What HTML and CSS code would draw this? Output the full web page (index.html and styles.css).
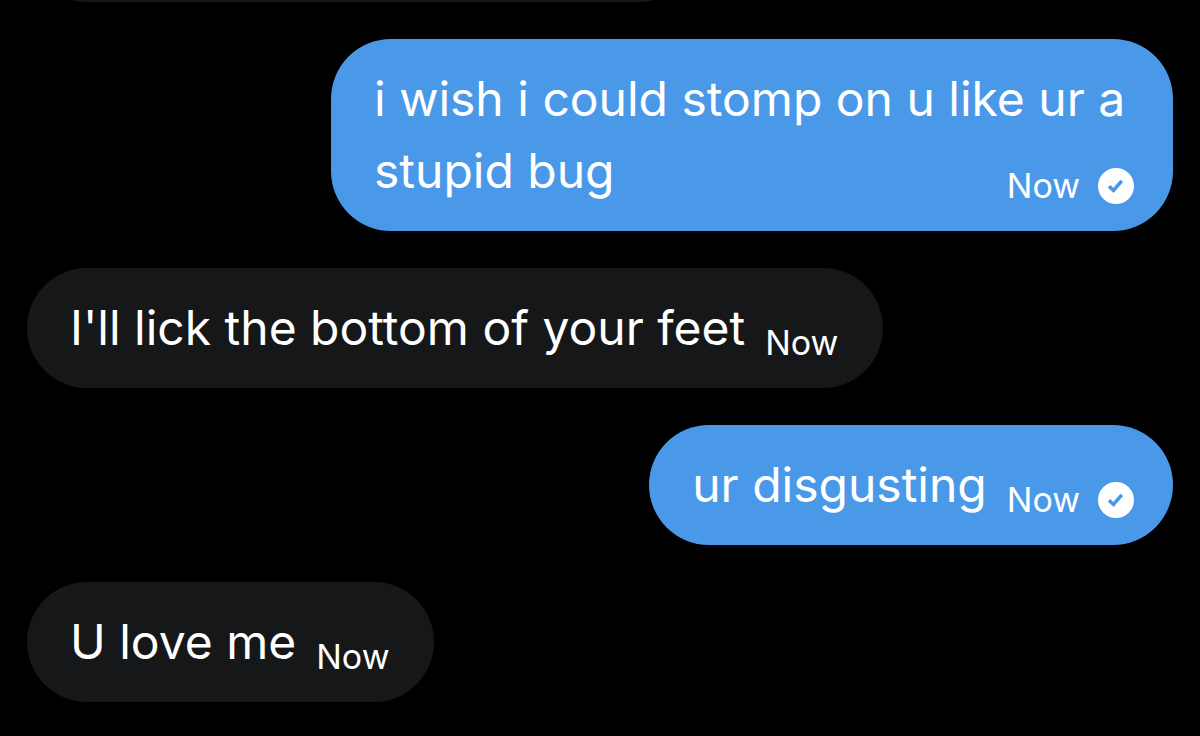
FILE: index.html
```html
<!DOCTYPE html>
<html lang="en">
<head>
<meta charset="utf-8">
<meta name="viewport" content="width=device-width, initial-scale=1">
<title>Chat</title>
<link rel="stylesheet" href="styles.css">
</head>
<body>
<main class="chat">
  <div class="bubble received previous"></div>
  <article class="bubble sent">
    <span class="text">i wish i could stomp on u like ur a stupid bug</span>
    <span class="meta"><span>Now</span>
      <svg class="check" viewBox="0 0 36 36" role="img" aria-label="Sent"><circle cx="18" cy="18" r="18" fill="#fff"/><path d="M11 18.2l4.5 4.3 8.3-9.7" fill="none" stroke="#4a99e9" stroke-width="3.6"/></svg>
    </span>
  </article>
  <article class="bubble received">
    <span class="text">I'll lick the bottom of your feet</span>
    <span class="meta"><span>Now</span></span>
  </article>
  <article class="bubble sent">
    <span class="text">ur disgusting</span>
    <span class="meta"><span>Now</span>
      <svg class="check" viewBox="0 0 36 36" role="img" aria-label="Sent"><circle cx="18" cy="18" r="18" fill="#fff"/><path d="M11 18.2l4.5 4.3 8.3-9.7" fill="none" stroke="#4a99e9" stroke-width="3.6"/></svg>
    </span>
  </article>
  <article class="bubble received">
    <span class="text">U love me</span>
    <span class="meta"><span>Now</span></span>
  </article>
</main>
</body>
</html>
```
FILE: styles.css
```css
* { box-sizing: border-box; }
body {
  margin: 0;
  background: #000;
  color: #fff;
  font-family: Inter, Roboto, sans-serif;
}
.chat {
  display: flex;
  flex-direction: column;
  gap: 37px;
  padding: 0 27px 34px;
}
.bubble {
  display: flow-root;
  max-width: 842px;
  padding: 24px 43px;
  border-radius: 60px;
  font-size: 48px;
  line-height: 72px;
}
.sent {
  align-self: flex-end;
  padding-right: 39px;
  background: #4a99e9;
}
.received {
  align-self: flex-start;
  max-width: 880px;
  padding-right: 45px;
  background: #161718;
}
.previous {
  width: 672px;
  height: 120px;
  margin-top: -118px;
}
/* The time stamp floats to the end of the last line of the message. */
.meta {
  float: right;
  display: flex;
  align-items: center;
  gap: 18px;
  margin: 31px 0 0 20px;
  font-size: 34px;
  line-height: 40px;
}
.check {
  width: 36px;
  height: 36px;
}
```
